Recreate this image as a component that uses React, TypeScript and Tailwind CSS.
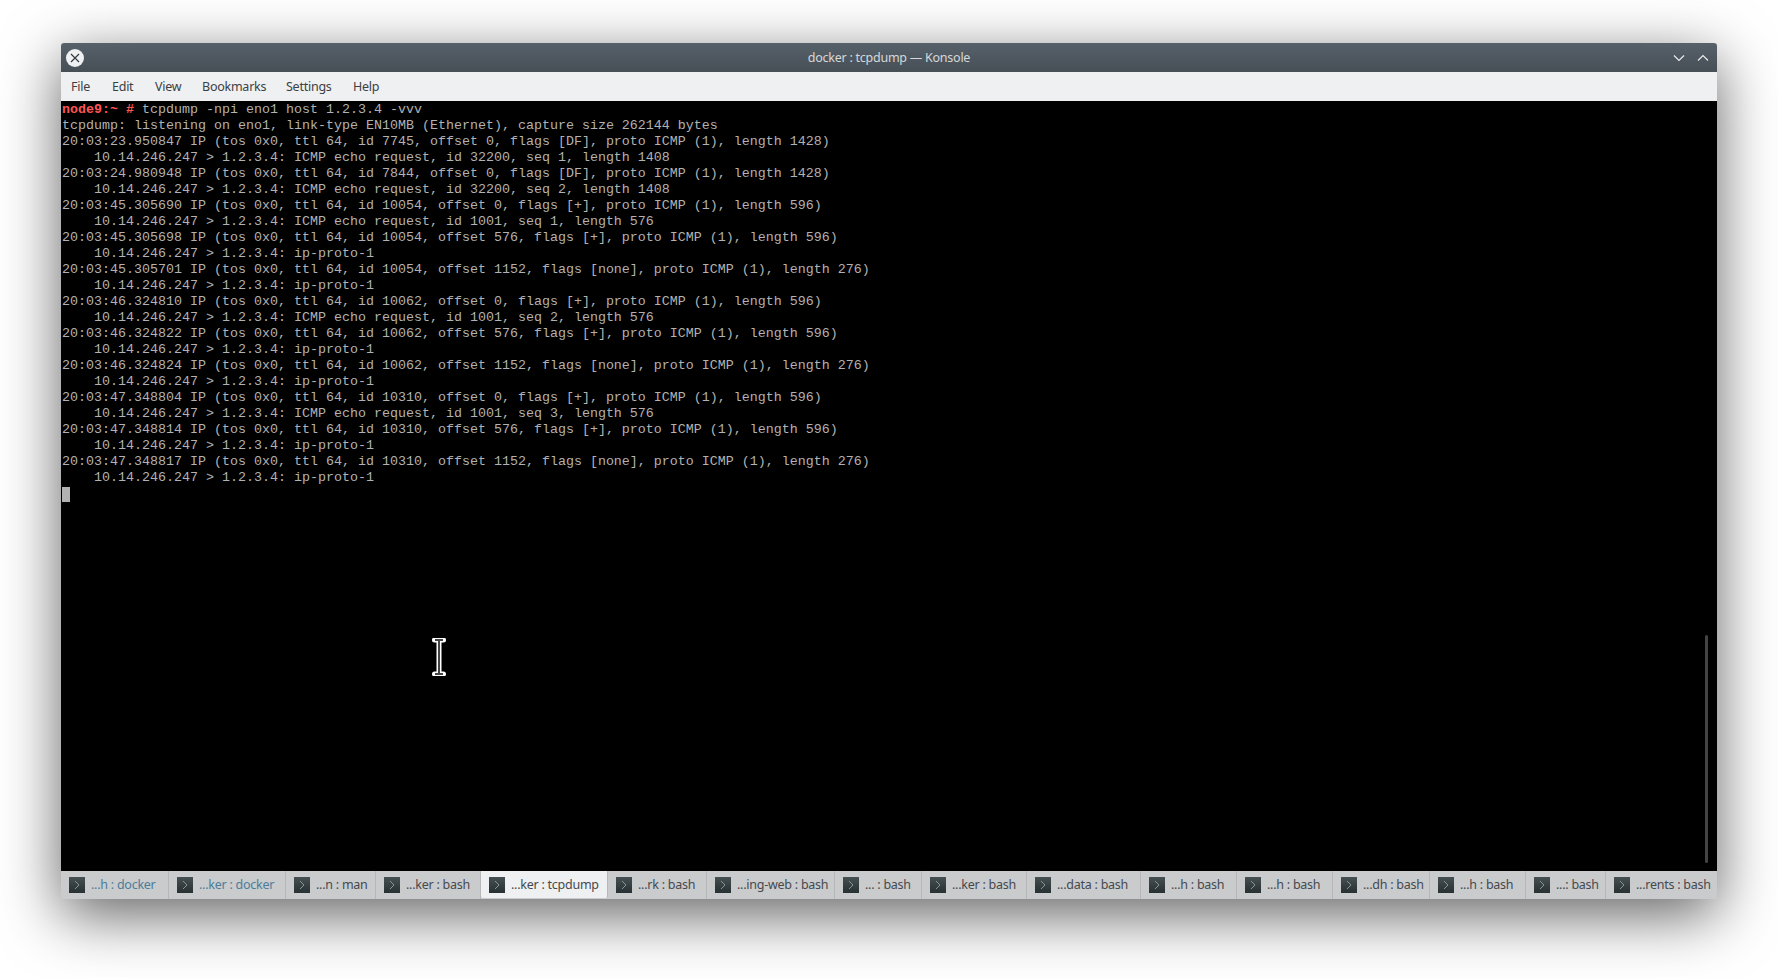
const menuItems = [
  { label: "File", className: "w-[41px]" },
  { label: "Edit", className: "w-[43px]" },
  { label: "View", className: "w-[47px]" },
  { label: "Bookmarks", className: "w-[84px]" },
  { label: "Settings", className: "w-[67px]" },
  { label: "Help", className: "w-[40px]" },
];

const tabs = [
  { label: "...h : docker", className: "w-[108px]", activity: true },
  { label: "...ker : docker", className: "w-[117px]", activity: true },
  { label: "...n : man", className: "w-[90px]" },
  { label: "...ker : bash", className: "w-[105px]" },
  { label: "...ker : tcpdump", className: "w-[127px]", active: true },
  { label: "...rk : bash", className: "w-[99px]" },
  { label: "...ing-web : bash", className: "w-[128px]" },
  { label: "... : bash", className: "w-[87px]" },
  { label: "...ker : bash", className: "w-[105px]" },
  { label: "...data : bash", className: "w-[114px]" },
  { label: "...h : bash", className: "w-[96px]" },
  { label: "...h : bash", className: "w-[96px]" },
  { label: "...dh : bash", className: "w-[97px]" },
  { label: "...h : bash", className: "w-[96px]" },
  { label: "...: bash", className: "w-[80px]" },
  { label: "...rents : bash", className: "flex-1" },
];

const src = "    10.14.246.247 > 1.2.3.4: ";
const proto = src + "ip-proto-1";

const output = [
  "tcpdump: listening on eno1, link-type EN10MB (Ethernet), capture size 262144 bytes",
  "20:03:23.950847 IP (tos 0x0, ttl 64, id 7745, offset 0, flags [DF], proto ICMP (1), length 1428)",
  src + "ICMP echo request, id 32200, seq 1, length 1408",
  "20:03:24.980948 IP (tos 0x0, ttl 64, id 7844, offset 0, flags [DF], proto ICMP (1), length 1428)",
  src + "ICMP echo request, id 32200, seq 2, length 1408",
  "20:03:45.305690 IP (tos 0x0, ttl 64, id 10054, offset 0, flags [+], proto ICMP (1), length 596)",
  src + "ICMP echo request, id 1001, seq 1, length 576",
  "20:03:45.305698 IP (tos 0x0, ttl 64, id 10054, offset 576, flags [+], proto ICMP (1), length 596)",
  proto,
  "20:03:45.305701 IP (tos 0x0, ttl 64, id 10054, offset 1152, flags [none], proto ICMP (1), length 276)",
  proto,
  "20:03:46.324810 IP (tos 0x0, ttl 64, id 10062, offset 0, flags [+], proto ICMP (1), length 596)",
  src + "ICMP echo request, id 1001, seq 2, length 576",
  "20:03:46.324822 IP (tos 0x0, ttl 64, id 10062, offset 576, flags [+], proto ICMP (1), length 596)",
  proto,
  "20:03:46.324824 IP (tos 0x0, ttl 64, id 10062, offset 1152, flags [none], proto ICMP (1), length 276)",
  proto,
  "20:03:47.348804 IP (tos 0x0, ttl 64, id 10310, offset 0, flags [+], proto ICMP (1), length 596)",
  src + "ICMP echo request, id 1001, seq 3, length 576",
  "20:03:47.348814 IP (tos 0x0, ttl 64, id 10310, offset 576, flags [+], proto ICMP (1), length 596)",
  proto,
  "20:03:47.348817 IP (tos 0x0, ttl 64, id 10310, offset 1152, flags [none], proto ICMP (1), length 276)",
  proto,
];

function TabIcon() {
  return (
    <span className="flex h-4 w-4 shrink-0 items-center justify-center bg-gradient-to-b from-[#465154] to-[#273032]">
      <svg width="16" height="16" viewBox="0 0 16 16" fill="none">
        <path d="M6 4l4 4-4 4" stroke="#8a9496" strokeWidth="1" />
      </svg>
    </span>
  );
}

function IBeam() {
  return (
    <svg className="absolute left-[371px] top-[537px]" width="14" height="38" viewBox="0 0 14 38" fill="none">
      <path
        d="M2.5 2H11.5M2.5 36H11.5M7 3V35"
        stroke="#ffffff"
        strokeWidth="5"
        strokeLinecap="round"
      />
      <path d="M3 2H11M3 36H11M7 2V36" stroke="#444444" strokeWidth="2" />
    </svg>
  );
}

export default function App() {
  return (
    <div className="h-screen overflow-hidden bg-white pl-[61px] pt-[43px] font-['Noto_Sans',sans-serif]">
      <div className="flex h-[856px] w-[1656px] flex-col rounded-t-[3px] shadow-[0_16px_60px_rgba(0,0,0,0.62)]">
        {/* Title bar */}
        <div className="flex h-[29px] shrink-0 items-center rounded-t-[3px] bg-gradient-to-b from-[#56616a] to-[#474f56] px-[5px]">
          <div className="w-[60px]">
            <span className="flex h-[18px] w-[18px] items-center justify-center rounded-full bg-[#eff0f1]">
              <svg width="12" height="12" viewBox="0 0 12 12" fill="none">
                <path d="M2 2l8 8M10 2l-8 8" stroke="#31363b" strokeWidth="1.1" />
              </svg>
            </span>
          </div>
          <span className="flex-1 pt-px text-center text-[12.5px] tracking-[-0.25px] text-[#d6d8da]">
            docker : tcpdump — Konsole
          </span>
          <div className="flex w-[60px] items-center justify-end gap-[12px] pr-[3px]">
            <svg width="12" height="8" viewBox="0 0 12 8" fill="none">
              <path d="M1 1.5l5 5 5-5" stroke="#eff0f1" strokeWidth="1.1" />
            </svg>
            <svg width="12" height="8" viewBox="0 0 12 8" fill="none">
              <path d="M1 6.5l5-5 5 5" stroke="#eff0f1" strokeWidth="1.1" />
            </svg>
          </div>
        </div>

        {/* Menu bar */}
        <div className="flex h-[29px] shrink-0 items-center bg-[#eff0f1] pl-[10px] pt-px text-[12.5px] tracking-[-0.25px] text-[#3b4045]">
          {menuItems.map((item) => (
            <span key={item.label} className={item.className}>
              {item.label}
            </span>
          ))}
        </div>

        {/* Terminal */}
        <div className="relative h-[770px] shrink-0 overflow-hidden bg-black pl-px pt-px font-['Liberation_Mono',monospace] text-[13.334px] leading-[16px] text-[#b2b2b2]">
          <div className="h-4 whitespace-pre">
            <span className="font-bold text-[#ff5454]">node9:~ #</span> tcpdump -npi eno1 host 1.2.3.4 -vvv
          </div>
          {output.map((line, i) => (
            <div key={i} className="h-4 whitespace-pre">
              {line}
            </div>
          ))}
          <div className="mt-px h-[15px] w-2 bg-[#b2b2b2]" />
          <IBeam />
          {/* Scrollbar */}
          <div className="absolute bottom-2 right-[9px] top-[534px] w-[3px] rounded-full bg-[#444444]" />
        </div>

        {/* Tab bar */}
        <div className="flex h-[28px] shrink-0 bg-[#cacbcd] text-[12.5px] tracking-[-0.25px]">
          {tabs.map((tab, i) => (
            <div
              key={i}
              className={`flex items-center gap-[6px] border-r border-[#b6b7b9] pl-[8px] last:border-r-0 ${tab.className} ${
                tab.active ? "h-[27px] rounded-b-[2px] bg-[#eff0f1]" : ""
              } ${tab.activity ? "text-[#4a7d9a]" : "text-[#45494d]"}`}
            >
              <TabIcon />
              <span className="whitespace-pre pt-px">{tab.label}</span>
            </div>
          ))}
        </div>
      </div>
    </div>
  );
}
